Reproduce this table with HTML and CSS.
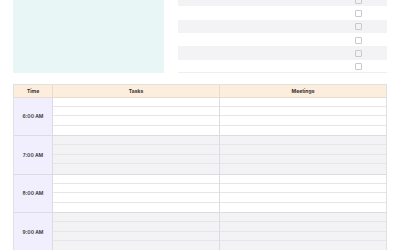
FILE: index.html
```html
<!DOCTYPE html>
<html>
<head>
<meta charset="utf-8">
<link rel="stylesheet" href="styles.css">
</head>
<body>
<div class="page">
  <div class="top">
    <div class="notes"></div>
    <div class="todo">
      <div class="todo-row grey"><span class="check"></span></div>
      <div class="todo-row"><span class="check"></span></div>
      <div class="todo-row grey"><span class="check"></span></div>
      <div class="todo-row"><span class="check"></span></div>
      <div class="todo-row grey"><span class="check"></span></div>
      <div class="todo-row last"><span class="check"></span></div>
    </div>
  </div>
  <div class="table">
    <div class="head">
      <div class="hcell time-col">Time</div>
      <div class="hcell">Tasks</div>
      <div class="hcell">Meetings</div>
    </div>
    <div class="hour">
      <div class="time">6:00 AM</div>
      <div class="col"><div class="line"></div><div class="line"></div><div class="line"></div><div class="line"></div></div>
      <div class="col"><div class="line"></div><div class="line"></div><div class="line"></div><div class="line"></div></div>
    </div>
    <div class="hour alt">
      <div class="time">7:00 AM</div>
      <div class="col"><div class="line"></div><div class="line"></div><div class="line"></div><div class="line"></div></div>
      <div class="col"><div class="line"></div><div class="line"></div><div class="line"></div><div class="line"></div></div>
    </div>
    <div class="hour">
      <div class="time">8:00 AM</div>
      <div class="col"><div class="line"></div><div class="line"></div><div class="line"></div><div class="line"></div></div>
      <div class="col"><div class="line"></div><div class="line"></div><div class="line"></div><div class="line"></div></div>
    </div>
    <div class="hour alt">
      <div class="time">9:00 AM</div>
      <div class="col"><div class="line"></div><div class="line"></div><div class="line"></div><div class="line"></div></div>
      <div class="col"><div class="line"></div><div class="line"></div><div class="line"></div><div class="line"></div></div>
    </div>
  </div>
</div>
</body>
</html>
```
FILE: styles.css
```css
html, body {
  margin: 0;
  padding: 0;
  background: #ffffff;
  overflow: hidden;
}
body {
  font-family: Inter, "Liberation Sans", sans-serif;
  color: #333;
}
.page {
  padding: 0 13px;
  margin-top: -7px;
}
.top {
  display: flex;
  gap: 14px;
  height: 80px;
}
.notes {
  width: 151px;
  background: #e8f6f6;
}
.todo {
  flex: 1;
  display: flex;
  flex-direction: column;
}
.todo-row {
  height: 13.33px;
  display: flex;
  align-items: center;
  justify-content: flex-end;
  padding-right: 25px;
  box-sizing: border-box;
}
.todo-row.grey {
  background: #f3f3f5;
}
.todo-row.last {
  border-bottom: 1px solid #eeeeef;
}
.check {
  width: 7px;
  height: 7px;
  border: 1px solid #c9c9cc;
  border-radius: 1px;
  box-sizing: border-box;
  margin-top: 1px;
}
.table {
  margin-top: 11px;
  border: 1px solid #e1e1e4;
  border-bottom: none;
  box-sizing: border-box;
}
.head {
  display: flex;
  height: 11.5px;
  background: #fdeddc;
  border-bottom: 1px solid #e6ddd2;
}
.hcell {
  flex: 1;
  display: flex;
  align-items: center;
  justify-content: center;
  font-size: 5px;
  font-weight: 700;
  color: #333;
  border-left: 1px solid #e6ddd2;
}
.hcell.time-col {
  flex: 0 0 38px;
  border-left: none;
}
.hour {
  display: flex;
  border-bottom: 1px solid #dcdce0;
}
.time {
  flex: 0 0 38px;
  background: #f1eefd;
  display: flex;
  align-items: center;
  justify-content: center;
  font-size: 5px;
  font-weight: 600;
  color: #333;
  border-right: 1px solid #dcdce0;
}
.col {
  flex: 1;
  display: flex;
  flex-direction: column;
}
.col + .col {
  border-left: 1px solid #dcdce0;
}
.line {
  height: 9.375px;
  box-sizing: border-box;
  border-bottom: 1px solid #e6e6e9;
  background: #ffffff;
}
.line:last-child {
  border-bottom: none;
}
.hour.alt .line {
  background: #f3f3f5;
}
```
